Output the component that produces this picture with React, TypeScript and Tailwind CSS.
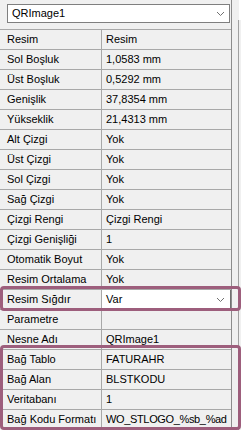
import React from "react";

const rows: [string, string][] = [
  ["Resim", "Resim"],
  ["Sol Boşluk", "1,0583 mm"],
  ["Üst Boşluk", "0,5292 mm"],
  ["Genişlik", "37,8354 mm"],
  ["Yükseklik", "21,4313 mm"],
  ["Alt Çizgi", "Yok"],
  ["Üst Çizgi", "Yok"],
  ["Sol Çizgi", "Yok"],
  ["Sağ Çizgi", "Yok"],
  ["Çizgi Rengi", "Çizgi Rengi"],
  ["Çizgi Genişliği", "1"],
  ["Otomatik Boyut", "Yok"],
  ["Resim Ortalama", "Yok"],
  ["Resim Sığdır", "Var"],
  ["Parametre", ""],
  ["Nesne Adı", "QRImage1"],
  ["Bağ Tablo", "FATURAHR"],
  ["Bağ Alan", "BLSTKODU"],
  ["Veritabanı", "1"],
  ["Bağ Kodu Formatı", "WO_STLOGO_%sb_%ad"],
];

function Chevron() {
  return (
    <svg width="9" height="6" viewBox="0 0 9 6" className="shrink-0">
      <polyline points="1,1 4.5,4.5 8,1" fill="none" stroke="#707070" strokeWidth="1" />
    </svg>
  );
}

export default function App() {
  return (
    <div
      className="relative w-[241px] h-[430px] overflow-hidden bg-[#f0f0f0] text-[11px] leading-none text-black"
      style={{ fontFamily: '"Liberation Sans", Arial, sans-serif' }}
    >
      <div className="flex h-full">
        <div className="w-[232px] h-full border-r border-[#8c8c8c] flex flex-col">
          <div className="h-[29px] pt-[4px] pl-[7px]">
            <div className="w-[223px] h-[19px] bg-white border border-[#7f7f7f] flex items-center pl-[4px] pr-[4px]">
              <span className="flex-1">QRImage1</span>
              <Chevron />
            </div>
          </div>
          <div className="flex flex-col">
            {rows.map(([k, v], i) => {
              const edit = k === "Resim Sığdır";
              const long = v.length > 14;
              return (
                <div
                  key={i}
                  className="grid grid-cols-[102px_1fr] h-[20px] border-t border-[#a8a8a8]"
                >
                  <div className="border-r border-[#a8a8a8] flex items-center pl-[7px] whitespace-nowrap overflow-hidden">
                    {k}
                  </div>
                  {edit ? (
                    <div className="bg-white flex items-center pl-[4px] pr-[5px] border-r border-[#6f6f6f]">
                      <span className="flex-1">{v}</span>
                      <Chevron />
                    </div>
                  ) : (
                    <div
                      className={
                        long
                          ? "flex items-center pl-[4px] whitespace-nowrap overflow-hidden tracking-[-0.35px]"
                          : "flex items-center pl-[4px] whitespace-nowrap overflow-hidden"
                      }
                    >
                      {v}
                    </div>
                  )}
                </div>
              );
            })}
          </div>
        </div>
        <div className="w-[9px] h-full flex flex-col">
          <div className="h-[20px] flex">
            <div className="w-[7px]" />
            <div className="flex-1 bg-white" />
          </div>
          <div className="flex-1 ml-[6px] border-l border-[#a0a0a0]" />
        </div>
      </div>
      <div className="absolute left-0 top-[286px] w-[241px] h-[25px] border-[3px] border-[#9d5e7c] rounded-[4px]" />
      <div className="absolute left-0 top-[345px] w-[241px] h-[85px] border-[3px] border-[#9d5e7c] rounded-[4px]" />
    </div>
  );
}
